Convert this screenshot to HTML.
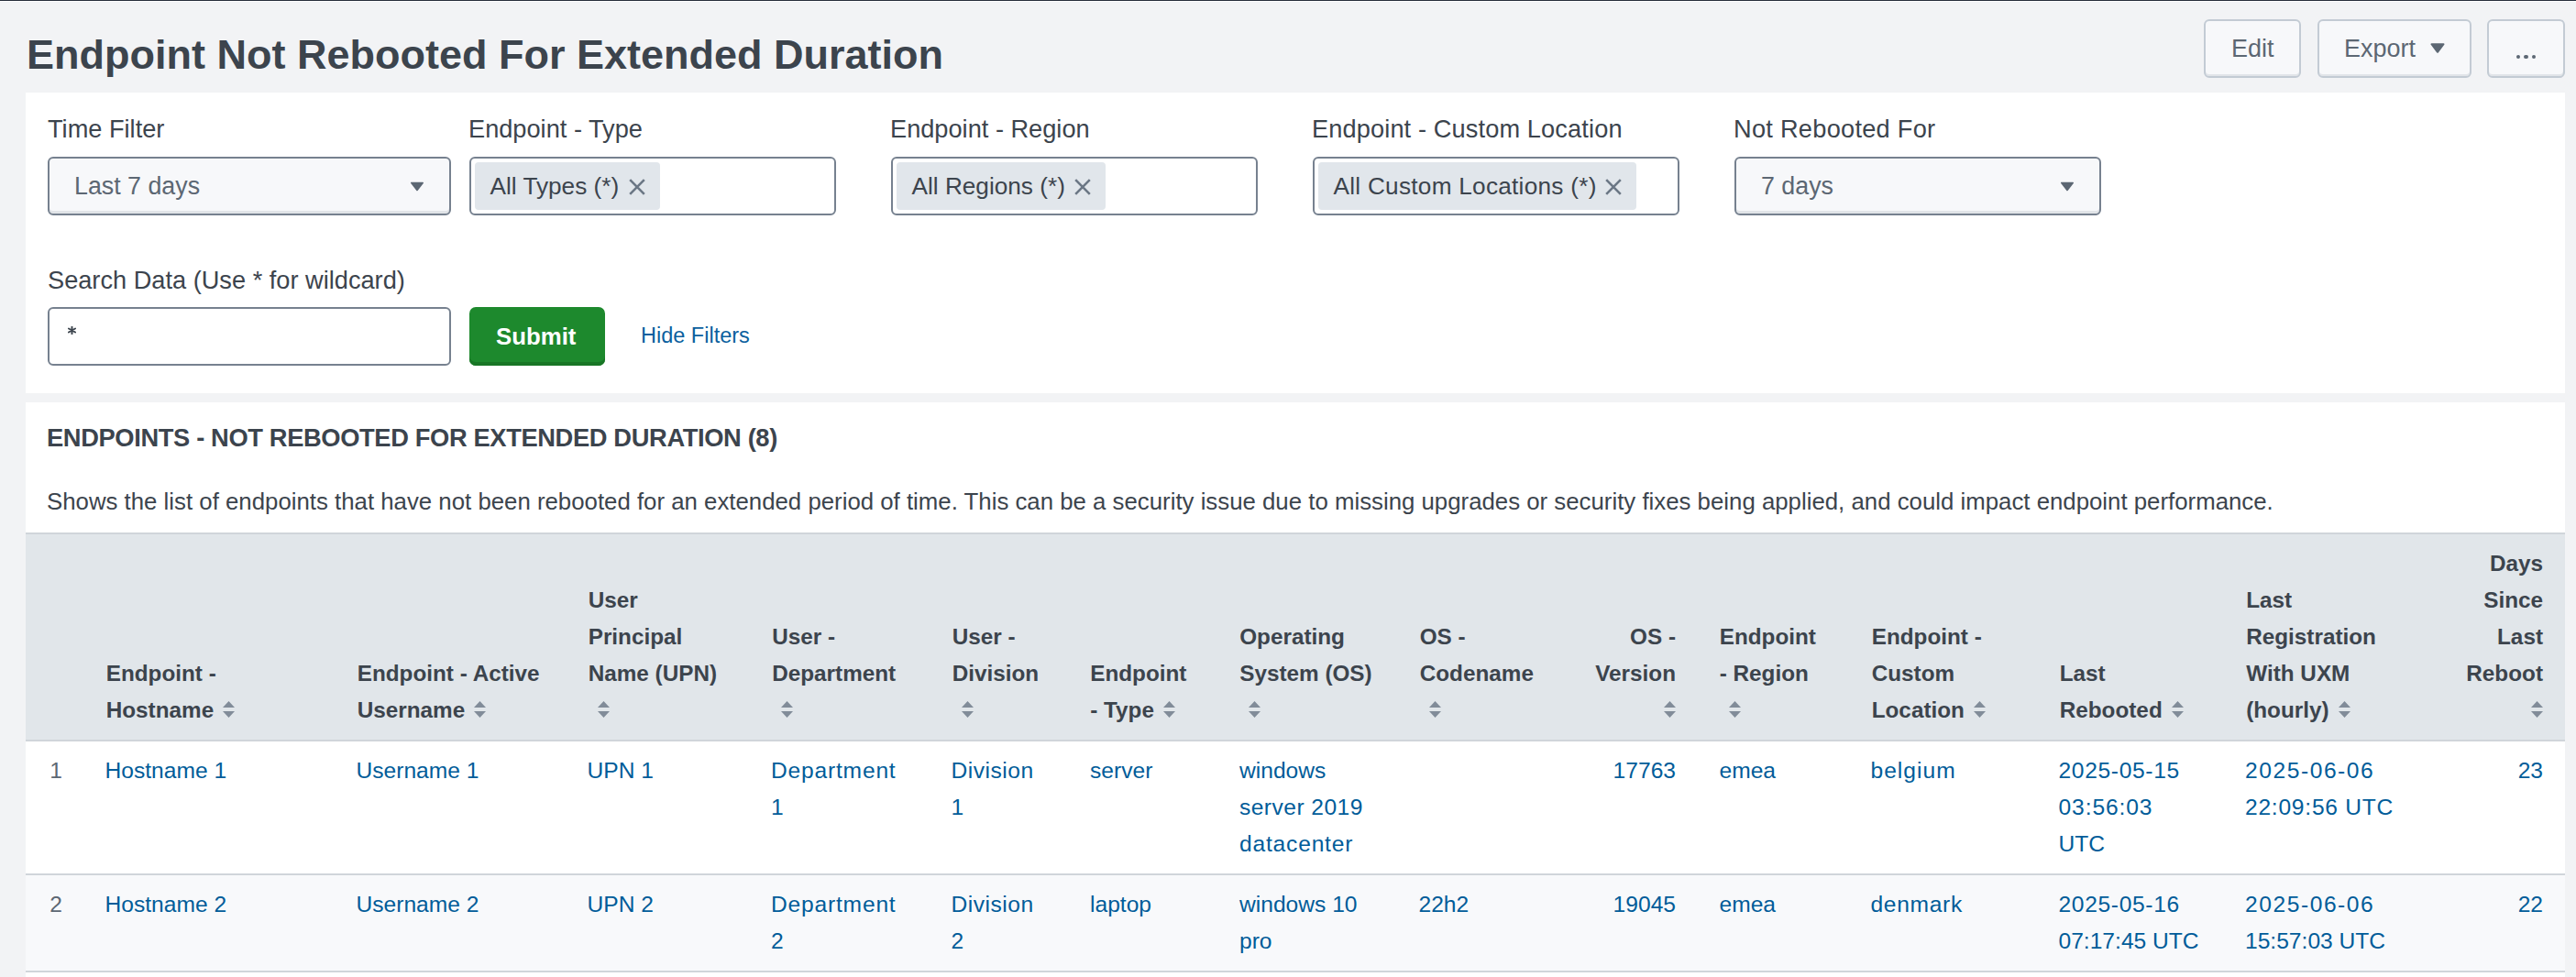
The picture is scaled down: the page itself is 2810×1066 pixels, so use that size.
<!DOCTYPE html>
<html><head><meta charset="utf-8"><title>Endpoint Not Rebooted For Extended Duration</title>
<style>
html,body{margin:0;padding:0;}
body{width:2810px;height:1066px;overflow:hidden;position:relative;background:#f2f3f5;font-family:"Liberation Sans",sans-serif;}
.t{position:absolute;white-space:nowrap;}
.b{position:absolute;}
</style></head><body>
<div class="b" style="left:0px;top:0px;width:2810px;height:1px;background:#272d3a"></div>
<div class="b" style="left:0px;top:1px;width:2810px;height:1px;background:#ffffff"></div>
<div class="t" style="left:29.00px;top:32.81px;font-size:45px;line-height:54px;color:#3c444d;font-weight:700;">Endpoint Not Rebooted For Extended Duration</div>
<div class="b" style="left:2404px;top:21px;width:106px;height:64px;background:#f7f8fa;border:2px solid #c3cbd4;border-radius:6px;box-sizing:border-box;box-shadow:inset 0 -2px 0 #e1e4e8"></div>
<div class="b" style="left:2528px;top:21px;width:168px;height:64px;background:#f7f8fa;border:2px solid #c3cbd4;border-radius:6px;box-sizing:border-box;box-shadow:inset 0 -2px 0 #e1e4e8"></div>
<div class="b" style="left:2713px;top:21px;width:85px;height:64px;background:#f7f8fa;border:2px solid #c3cbd4;border-radius:6px;box-sizing:border-box;box-shadow:inset 0 -2px 0 #e1e4e8"></div>
<div class="t" style="left:2434.00px;top:37.24px;font-size:27px;line-height:32px;color:#5c6773;font-weight:400;">Edit</div>
<div class="t" style="left:2557.00px;top:37.24px;font-size:27px;line-height:32px;color:#5c6773;font-weight:400;">Export</div>
<svg class="b" style="left:2651px;top:47px" width="16" height="11" viewBox="0 0 16 11"><path d="M1.5 1.2 L14.5 1.2 L8 9.8 Z" fill="#5c6773" stroke="#5c6773" stroke-width="2" stroke-linejoin="round"/></svg>
<div class="b" style="left:2744.7px;top:59.9px;width:4.6px;height:4.6px;border-radius:50%;background:#5c6773"></div>
<div class="b" style="left:2753.2px;top:59.9px;width:4.6px;height:4.6px;border-radius:50%;background:#5c6773"></div>
<div class="b" style="left:2761.7px;top:59.9px;width:4.6px;height:4.6px;border-radius:50%;background:#5c6773"></div>
<div class="b" style="left:28px;top:101px;width:2770px;height:328px;background:#ffffff"></div>
<div class="t" style="left:52.00px;top:124.38px;font-size:27.2px;line-height:33px;color:#3c444d;font-weight:400;">Time Filter</div>
<div class="t" style="left:511.00px;top:124.38px;font-size:27.2px;line-height:33px;color:#3c444d;font-weight:400;">Endpoint - Type</div>
<div class="t" style="left:971.00px;top:124.38px;font-size:27.2px;line-height:33px;color:#3c444d;font-weight:400;">Endpoint - Region</div>
<div class="t" style="left:1431.00px;top:124.38px;font-size:27.2px;line-height:33px;color:#3c444d;font-weight:400;letter-spacing:0.12px;">Endpoint - Custom Location</div>
<div class="t" style="left:1891.00px;top:124.38px;font-size:27.2px;line-height:33px;color:#3c444d;font-weight:400;letter-spacing:0.27px;">Not Rebooted For</div>
<div class="b" style="left:52px;top:171px;width:440px;height:64px;background:#f7f8fa;border:2px solid #76818f;border-radius:6px;box-sizing:border-box;box-shadow:inset 0 -3px 0 #e1e4e8"></div>
<div class="t" style="left:81.00px;top:187.21px;font-size:26.8px;line-height:32px;color:#5c6773;font-weight:400;">Last 7 days</div>
<svg class="b" style="left:447px;top:198px" width="16" height="11" viewBox="0 0 16 11"><path d="M1.8 1.5 L14.2 1.5 L8 9.5 Z" fill="#5c6773" stroke="#5c6773" stroke-width="1.6" stroke-linejoin="round"/></svg>
<div class="b" style="left:1892px;top:171px;width:400px;height:64px;background:#f7f8fa;border:2px solid #76818f;border-radius:6px;box-sizing:border-box;box-shadow:inset 0 -3px 0 #e1e4e8"></div>
<div class="t" style="left:1921.00px;top:187.21px;font-size:26.8px;line-height:32px;color:#5c6773;font-weight:400;">7 days</div>
<svg class="b" style="left:2247px;top:198px" width="16" height="11" viewBox="0 0 16 11"><path d="M1.8 1.5 L14.2 1.5 L8 9.5 Z" fill="#5c6773" stroke="#5c6773" stroke-width="1.6" stroke-linejoin="round"/></svg>
<div class="b" style="left:512px;top:171px;width:400px;height:64px;background:#ffffff;border:2px solid #76818f;border-radius:6px;box-sizing:border-box"></div>
<div class="b" style="left:518px;top:177px;width:202px;height:52px;background:#e1e6eb;border-radius:4px"></div>
<div class="t" style="left:534.50px;top:187.92px;font-size:26.2px;line-height:31px;color:#3c444d;font-weight:400;letter-spacing:0px;">All Types (*)</div>
<svg class="b" style="left:686.0px;top:195px" width="18" height="18" viewBox="0 0 18 18"><path d="M1.2 1.2 L16.8 16.8 M16.8 1.2 L1.2 16.8" stroke="#6b7785" stroke-width="2.6" stroke-linecap="butt"/></svg>
<div class="b" style="left:972px;top:171px;width:400px;height:64px;background:#ffffff;border:2px solid #76818f;border-radius:6px;box-sizing:border-box"></div>
<div class="b" style="left:978px;top:177px;width:228px;height:52px;background:#e1e6eb;border-radius:4px"></div>
<div class="t" style="left:994.50px;top:187.92px;font-size:26.2px;line-height:31px;color:#3c444d;font-weight:400;letter-spacing:0px;">All Regions (*)</div>
<svg class="b" style="left:1172.0px;top:195px" width="18" height="18" viewBox="0 0 18 18"><path d="M1.2 1.2 L16.8 16.8 M16.8 1.2 L1.2 16.8" stroke="#6b7785" stroke-width="2.6" stroke-linecap="butt"/></svg>
<div class="b" style="left:1432px;top:171px;width:400px;height:64px;background:#ffffff;border:2px solid #76818f;border-radius:6px;box-sizing:border-box"></div>
<div class="b" style="left:1438px;top:177px;width:347px;height:52px;background:#e1e6eb;border-radius:4px"></div>
<div class="t" style="left:1454.50px;top:187.92px;font-size:26.2px;line-height:31px;color:#3c444d;font-weight:400;letter-spacing:0.26px;">All Custom Locations (*)</div>
<svg class="b" style="left:1751.0px;top:195px" width="18" height="18" viewBox="0 0 18 18"><path d="M1.2 1.2 L16.8 16.8 M16.8 1.2 L1.2 16.8" stroke="#6b7785" stroke-width="2.6" stroke-linecap="butt"/></svg>
<div class="t" style="left:52.00px;top:288.58px;font-size:27.2px;line-height:33px;color:#3c444d;font-weight:400;">Search Data (Use * for wildcard)</div>
<div class="b" style="left:52px;top:335px;width:440px;height:64px;background:#ffffff;border:2px solid #76818f;border-radius:6px;box-sizing:border-box"></div>
<svg class="b" style="left:74.3px;top:356.4px" width="9" height="9" viewBox="0 0 9 9"><path d="M4.5 0.4 L4.5 8.6 M0.95 2.45 L8.05 6.55 M0.95 6.55 L8.05 2.45" stroke="#3c444d" stroke-width="1.9" stroke-linecap="round"/></svg>
<div class="b" style="left:512px;top:335px;width:148px;height:64px;background:#1d892d;border-radius:7px;box-shadow:inset 0 -4px 0 #187525"></div>
<div class="t" style="left:541.00px;top:351.56px;font-size:25.8px;line-height:31px;color:#ffffff;font-weight:700;">Submit</div>
<div class="t" style="left:699.00px;top:351.86px;font-size:23.5px;line-height:28px;color:#0b5f9e;font-weight:400;">Hide Filters</div>
<div class="b" style="left:28px;top:439px;width:2770px;height:627px;background:#ffffff"></div>
<div class="t" style="left:51.00px;top:461.04px;font-size:27.3px;line-height:33px;color:#3c444d;font-weight:700;letter-spacing:-0.37px;">ENDPOINTS - NOT REBOOTED FOR EXTENDED DURATION (8)</div>
<div class="t" style="left:51.00px;top:531.56px;font-size:25.8px;line-height:31px;color:#3c444d;font-weight:400;">Shows the list of endpoints that have not been rebooted for an extended period of time. This can be a security issue due to missing upgrades or security fixes being applied, and could impact endpoint performance.</div>
<div class="b" style="left:28px;top:581px;width:2770px;height:2px;background:#d0d5da"></div>
<div class="b" style="left:28px;top:583px;width:2770px;height:224px;background:#e1e6ea"></div>
<div class="b" style="left:28px;top:807px;width:2770px;height:2px;background:#d0d5da"></div>
<div class="t" style="left:115.70px;top:714.58px;font-size:24.3px;line-height:40px;color:#3c444d;font-weight:700;white-space:nowrap;">Endpoint -</div>
<div class="t" style="left:115.70px;top:754.58px;font-size:24.3px;line-height:40px;color:#3c444d;font-weight:700;white-space:nowrap;">Hostname<svg width="13" height="18" viewBox="0 0 13 18" style="display:inline-block;vertical-align:0px;margin-left:10px"><path d="M6.5 0 L13 7 L0 7 Z M0 11 L13 11 L6.5 18 Z" fill="#818c99"/></svg></div>
<div class="t" style="left:389.70px;top:714.58px;font-size:24.3px;line-height:40px;color:#3c444d;font-weight:700;white-space:nowrap;">Endpoint - Active</div>
<div class="t" style="left:389.70px;top:754.58px;font-size:24.3px;line-height:40px;color:#3c444d;font-weight:700;white-space:nowrap;">Username<svg width="13" height="18" viewBox="0 0 13 18" style="display:inline-block;vertical-align:0px;margin-left:10px"><path d="M6.5 0 L13 7 L0 7 Z M0 11 L13 11 L6.5 18 Z" fill="#818c99"/></svg></div>
<div class="t" style="left:641.70px;top:634.58px;font-size:24.3px;line-height:40px;color:#3c444d;font-weight:700;white-space:nowrap;">User</div>
<div class="t" style="left:641.70px;top:674.58px;font-size:24.3px;line-height:40px;color:#3c444d;font-weight:700;white-space:nowrap;">Principal</div>
<div class="t" style="left:641.70px;top:714.58px;font-size:24.3px;line-height:40px;color:#3c444d;font-weight:700;white-space:nowrap;">Name (UPN)</div>
<div class="t" style="left:641.70px;top:754.58px;font-size:24.3px;line-height:40px;color:#3c444d;font-weight:700;white-space:nowrap;"><svg width="13" height="18" viewBox="0 0 13 18" style="display:inline-block;vertical-align:0px;margin-left:10px"><path d="M6.5 0 L13 7 L0 7 Z M0 11 L13 11 L6.5 18 Z" fill="#818c99"/></svg></div>
<div class="t" style="left:842.20px;top:674.58px;font-size:24.3px;line-height:40px;color:#3c444d;font-weight:700;white-space:nowrap;">User -</div>
<div class="t" style="left:842.20px;top:714.58px;font-size:24.3px;line-height:40px;color:#3c444d;font-weight:700;white-space:nowrap;">Department</div>
<div class="t" style="left:842.20px;top:754.58px;font-size:24.3px;line-height:40px;color:#3c444d;font-weight:700;white-space:nowrap;"><svg width="13" height="18" viewBox="0 0 13 18" style="display:inline-block;vertical-align:0px;margin-left:10px"><path d="M6.5 0 L13 7 L0 7 Z M0 11 L13 11 L6.5 18 Z" fill="#818c99"/></svg></div>
<div class="t" style="left:1038.70px;top:674.58px;font-size:24.3px;line-height:40px;color:#3c444d;font-weight:700;white-space:nowrap;">User -</div>
<div class="t" style="left:1038.70px;top:714.58px;font-size:24.3px;line-height:40px;color:#3c444d;font-weight:700;white-space:nowrap;">Division</div>
<div class="t" style="left:1038.70px;top:754.58px;font-size:24.3px;line-height:40px;color:#3c444d;font-weight:700;white-space:nowrap;"><svg width="13" height="18" viewBox="0 0 13 18" style="display:inline-block;vertical-align:0px;margin-left:10px"><path d="M6.5 0 L13 7 L0 7 Z M0 11 L13 11 L6.5 18 Z" fill="#818c99"/></svg></div>
<div class="t" style="left:1189.20px;top:714.58px;font-size:24.3px;line-height:40px;color:#3c444d;font-weight:700;white-space:nowrap;">Endpoint</div>
<div class="t" style="left:1189.20px;top:754.58px;font-size:24.3px;line-height:40px;color:#3c444d;font-weight:700;white-space:nowrap;">- Type<svg width="13" height="18" viewBox="0 0 13 18" style="display:inline-block;vertical-align:0px;margin-left:10px"><path d="M6.5 0 L13 7 L0 7 Z M0 11 L13 11 L6.5 18 Z" fill="#818c99"/></svg></div>
<div class="t" style="left:1352.20px;top:674.58px;font-size:24.3px;line-height:40px;color:#3c444d;font-weight:700;white-space:nowrap;">Operating</div>
<div class="t" style="left:1352.20px;top:714.58px;font-size:24.3px;line-height:40px;color:#3c444d;font-weight:700;white-space:nowrap;">System (OS)</div>
<div class="t" style="left:1352.20px;top:754.58px;font-size:24.3px;line-height:40px;color:#3c444d;font-weight:700;white-space:nowrap;"><svg width="13" height="18" viewBox="0 0 13 18" style="display:inline-block;vertical-align:0px;margin-left:10px"><path d="M6.5 0 L13 7 L0 7 Z M0 11 L13 11 L6.5 18 Z" fill="#818c99"/></svg></div>
<div class="t" style="left:1548.70px;top:674.58px;font-size:24.3px;line-height:40px;color:#3c444d;font-weight:700;white-space:nowrap;">OS -</div>
<div class="t" style="left:1548.70px;top:714.58px;font-size:24.3px;line-height:40px;color:#3c444d;font-weight:700;white-space:nowrap;">Codename</div>
<div class="t" style="left:1548.70px;top:754.58px;font-size:24.3px;line-height:40px;color:#3c444d;font-weight:700;white-space:nowrap;"><svg width="13" height="18" viewBox="0 0 13 18" style="display:inline-block;vertical-align:0px;margin-left:10px"><path d="M6.5 0 L13 7 L0 7 Z M0 11 L13 11 L6.5 18 Z" fill="#818c99"/></svg></div>
<div class="t" style="left:1875.70px;top:674.58px;font-size:24.3px;line-height:40px;color:#3c444d;font-weight:700;white-space:nowrap;">Endpoint</div>
<div class="t" style="left:1875.70px;top:714.58px;font-size:24.3px;line-height:40px;color:#3c444d;font-weight:700;white-space:nowrap;">- Region</div>
<div class="t" style="left:1875.70px;top:754.58px;font-size:24.3px;line-height:40px;color:#3c444d;font-weight:700;white-space:nowrap;"><svg width="13" height="18" viewBox="0 0 13 18" style="display:inline-block;vertical-align:0px;margin-left:10px"><path d="M6.5 0 L13 7 L0 7 Z M0 11 L13 11 L6.5 18 Z" fill="#818c99"/></svg></div>
<div class="t" style="left:2041.70px;top:674.58px;font-size:24.3px;line-height:40px;color:#3c444d;font-weight:700;white-space:nowrap;">Endpoint -</div>
<div class="t" style="left:2041.70px;top:714.58px;font-size:24.3px;line-height:40px;color:#3c444d;font-weight:700;white-space:nowrap;">Custom</div>
<div class="t" style="left:2041.70px;top:754.58px;font-size:24.3px;line-height:40px;color:#3c444d;font-weight:700;white-space:nowrap;">Location<svg width="13" height="18" viewBox="0 0 13 18" style="display:inline-block;vertical-align:0px;margin-left:10px"><path d="M6.5 0 L13 7 L0 7 Z M0 11 L13 11 L6.5 18 Z" fill="#818c99"/></svg></div>
<div class="t" style="left:2246.70px;top:714.58px;font-size:24.3px;line-height:40px;color:#3c444d;font-weight:700;white-space:nowrap;">Last</div>
<div class="t" style="left:2246.70px;top:754.58px;font-size:24.3px;line-height:40px;color:#3c444d;font-weight:700;white-space:nowrap;">Rebooted<svg width="13" height="18" viewBox="0 0 13 18" style="display:inline-block;vertical-align:0px;margin-left:10px"><path d="M6.5 0 L13 7 L0 7 Z M0 11 L13 11 L6.5 18 Z" fill="#818c99"/></svg></div>
<div class="t" style="left:2450.20px;top:634.58px;font-size:24.3px;line-height:40px;color:#3c444d;font-weight:700;white-space:nowrap;">Last</div>
<div class="t" style="left:2450.20px;top:674.58px;font-size:24.3px;line-height:40px;color:#3c444d;font-weight:700;white-space:nowrap;">Registration</div>
<div class="t" style="left:2450.20px;top:714.58px;font-size:24.3px;line-height:40px;color:#3c444d;font-weight:700;white-space:nowrap;">With UXM</div>
<div class="t" style="left:2450.20px;top:754.58px;font-size:24.3px;line-height:40px;color:#3c444d;font-weight:700;white-space:nowrap;">(hourly)<svg width="13" height="18" viewBox="0 0 13 18" style="display:inline-block;vertical-align:0px;margin-left:10px"><path d="M6.5 0 L13 7 L0 7 Z M0 11 L13 11 L6.5 18 Z" fill="#818c99"/></svg></div>
<div class="t" style="right:982.00px;top:674.58px;font-size:24.3px;line-height:40px;color:#3c444d;font-weight:700;white-space:nowrap;">OS -</div>
<div class="t" style="right:982.00px;top:714.58px;font-size:24.3px;line-height:40px;color:#3c444d;font-weight:700;white-space:nowrap;">Version</div>
<div class="t" style="right:982.00px;top:754.58px;font-size:24.3px;line-height:40px;color:#3c444d;font-weight:700;white-space:nowrap;"><svg width="13" height="18" viewBox="0 0 13 18" style="display:inline-block;vertical-align:0px;margin-left:10px"><path d="M6.5 0 L13 7 L0 7 Z M0 11 L13 11 L6.5 18 Z" fill="#818c99"/></svg></div>
<div class="t" style="right:36.00px;top:594.58px;font-size:24.3px;line-height:40px;color:#3c444d;font-weight:700;white-space:nowrap;">Days</div>
<div class="t" style="right:36.00px;top:634.58px;font-size:24.3px;line-height:40px;color:#3c444d;font-weight:700;white-space:nowrap;">Since</div>
<div class="t" style="right:36.00px;top:674.58px;font-size:24.3px;line-height:40px;color:#3c444d;font-weight:700;white-space:nowrap;">Last</div>
<div class="t" style="right:36.00px;top:714.58px;font-size:24.3px;line-height:40px;color:#3c444d;font-weight:700;white-space:nowrap;">Reboot</div>
<div class="t" style="right:36.00px;top:754.58px;font-size:24.3px;line-height:40px;color:#3c444d;font-weight:700;white-space:nowrap;"><svg width="13" height="18" viewBox="0 0 13 18" style="display:inline-block;vertical-align:0px;margin-left:10px"><path d="M6.5 0 L13 7 L0 7 Z M0 11 L13 11 L6.5 18 Z" fill="#818c99"/></svg></div>
<div class="b" style="left:28px;top:953px;width:2770px;height:2px;background:#d0d5da"></div>
<div class="b" style="left:28px;top:955px;width:2770px;height:104px;background:#f8f9fb"></div>
<div class="b" style="left:28px;top:1059px;width:2770px;height:2px;background:#d0d5da"></div>
<div class="t" style="left:114.50px;top:821.28px;font-size:24.6px;line-height:40px;color:#005c99;font-weight:400;white-space:nowrap;">Hostname 1</div>
<div class="t" style="left:388.50px;top:821.28px;font-size:24.6px;line-height:40px;color:#005c99;font-weight:400;white-space:nowrap;">Username 1</div>
<div class="t" style="left:640.50px;top:821.28px;font-size:24.6px;line-height:40px;color:#005c99;font-weight:400;white-space:nowrap;">UPN 1</div>
<div class="t" style="left:841.00px;top:821.28px;font-size:24.6px;line-height:40px;color:#005c99;font-weight:400;white-space:nowrap;letter-spacing:0.8px;">Department</div>
<div class="t" style="left:841.00px;top:861.28px;font-size:24.6px;line-height:40px;color:#005c99;font-weight:400;white-space:nowrap;">1</div>
<div class="t" style="left:1037.50px;top:821.28px;font-size:24.6px;line-height:40px;color:#005c99;font-weight:400;white-space:nowrap;letter-spacing:0.5px;">Division</div>
<div class="t" style="left:1037.50px;top:861.28px;font-size:24.6px;line-height:40px;color:#005c99;font-weight:400;white-space:nowrap;">1</div>
<div class="t" style="left:1189.00px;top:821.28px;font-size:24.6px;line-height:40px;color:#005c99;font-weight:400;white-space:nowrap;">server</div>
<div class="t" style="left:1352.00px;top:821.28px;font-size:24.6px;line-height:40px;color:#005c99;font-weight:400;white-space:nowrap;">windows</div>
<div class="t" style="left:1352.00px;top:861.28px;font-size:24.6px;line-height:40px;color:#005c99;font-weight:400;white-space:nowrap;letter-spacing:0.45px;">server 2019</div>
<div class="t" style="left:1352.00px;top:901.28px;font-size:24.6px;line-height:40px;color:#005c99;font-weight:400;white-space:nowrap;letter-spacing:0.8px;">datacenter</div>
<div class="t" style="left:1875.50px;top:821.28px;font-size:24.6px;line-height:40px;color:#005c99;font-weight:400;white-space:nowrap;">emea</div>
<div class="t" style="left:2040.50px;top:821.28px;font-size:24.6px;line-height:40px;color:#005c99;font-weight:400;white-space:nowrap;letter-spacing:1.0px;">belgium</div>
<div class="t" style="left:2245.50px;top:821.28px;font-size:24.6px;line-height:40px;color:#005c99;font-weight:400;white-space:nowrap;letter-spacing:0.65px;">2025-05-15</div>
<div class="t" style="left:2245.50px;top:861.28px;font-size:24.6px;line-height:40px;color:#005c99;font-weight:400;white-space:nowrap;letter-spacing:0.9px;">03:56:03</div>
<div class="t" style="left:2245.50px;top:901.28px;font-size:24.6px;line-height:40px;color:#005c99;font-weight:400;white-space:nowrap;">UTC</div>
<div class="t" style="left:2449.00px;top:821.28px;font-size:24.6px;line-height:40px;color:#005c99;font-weight:400;white-space:nowrap;letter-spacing:1.55px;">2025-06-06</div>
<div class="t" style="left:2449.00px;top:861.28px;font-size:24.6px;line-height:40px;color:#005c99;font-weight:400;white-space:nowrap;letter-spacing:0.75px;">22:09:56 UTC</div>
<div class="t" style="left:114.50px;top:967.48px;font-size:24.6px;line-height:40px;color:#005c99;font-weight:400;white-space:nowrap;">Hostname 2</div>
<div class="t" style="left:388.50px;top:967.48px;font-size:24.6px;line-height:40px;color:#005c99;font-weight:400;white-space:nowrap;">Username 2</div>
<div class="t" style="left:640.50px;top:967.48px;font-size:24.6px;line-height:40px;color:#005c99;font-weight:400;white-space:nowrap;">UPN 2</div>
<div class="t" style="left:841.00px;top:967.48px;font-size:24.6px;line-height:40px;color:#005c99;font-weight:400;white-space:nowrap;letter-spacing:0.8px;">Department</div>
<div class="t" style="left:841.00px;top:1007.48px;font-size:24.6px;line-height:40px;color:#005c99;font-weight:400;white-space:nowrap;">2</div>
<div class="t" style="left:1037.50px;top:967.48px;font-size:24.6px;line-height:40px;color:#005c99;font-weight:400;white-space:nowrap;letter-spacing:0.5px;">Division</div>
<div class="t" style="left:1037.50px;top:1007.48px;font-size:24.6px;line-height:40px;color:#005c99;font-weight:400;white-space:nowrap;">2</div>
<div class="t" style="left:1189.00px;top:967.48px;font-size:24.6px;line-height:40px;color:#005c99;font-weight:400;white-space:nowrap;">laptop</div>
<div class="t" style="left:1352.00px;top:967.48px;font-size:24.6px;line-height:40px;color:#005c99;font-weight:400;white-space:nowrap;">windows 10</div>
<div class="t" style="left:1352.00px;top:1007.48px;font-size:24.6px;line-height:40px;color:#005c99;font-weight:400;white-space:nowrap;">pro</div>
<div class="t" style="left:1547.50px;top:967.48px;font-size:24.6px;line-height:40px;color:#005c99;font-weight:400;white-space:nowrap;">22h2</div>
<div class="t" style="left:1875.50px;top:967.48px;font-size:24.6px;line-height:40px;color:#005c99;font-weight:400;white-space:nowrap;">emea</div>
<div class="t" style="left:2040.50px;top:967.48px;font-size:24.6px;line-height:40px;color:#005c99;font-weight:400;white-space:nowrap;letter-spacing:0.67px;">denmark</div>
<div class="t" style="left:2245.50px;top:967.48px;font-size:24.6px;line-height:40px;color:#005c99;font-weight:400;white-space:nowrap;letter-spacing:0.65px;">2025-05-16</div>
<div class="t" style="left:2245.50px;top:1007.48px;font-size:24.6px;line-height:40px;color:#005c99;font-weight:400;white-space:nowrap;">07:17:45 UTC</div>
<div class="t" style="left:2449.00px;top:967.48px;font-size:24.6px;line-height:40px;color:#005c99;font-weight:400;white-space:nowrap;letter-spacing:1.55px;">2025-06-06</div>
<div class="t" style="left:2449.00px;top:1007.48px;font-size:24.6px;line-height:40px;color:#005c99;font-weight:400;white-space:nowrap;">15:57:03 UTC</div>
<div class="t" style="right:982.00px;top:821.28px;font-size:24.6px;line-height:40px;color:#005c99;font-weight:400;white-space:nowrap;">17763</div>
<div class="t" style="right:982.00px;top:967.48px;font-size:24.6px;line-height:40px;color:#005c99;font-weight:400;white-space:nowrap;">19045</div>
<div class="t" style="right:36.00px;top:821.28px;font-size:24.6px;line-height:40px;color:#005c99;font-weight:400;white-space:nowrap;">23</div>
<div class="t" style="right:36.00px;top:967.48px;font-size:24.6px;line-height:40px;color:#005c99;font-weight:400;white-space:nowrap;">22</div>
<div class="t" style="right:2742.00px;top:821.28px;font-size:24.6px;line-height:40px;color:#5c6773;font-weight:400;white-space:nowrap;">1</div>
<div class="t" style="right:2742.00px;top:967.48px;font-size:24.6px;line-height:40px;color:#5c6773;font-weight:400;white-space:nowrap;">2</div>
</body></html>
